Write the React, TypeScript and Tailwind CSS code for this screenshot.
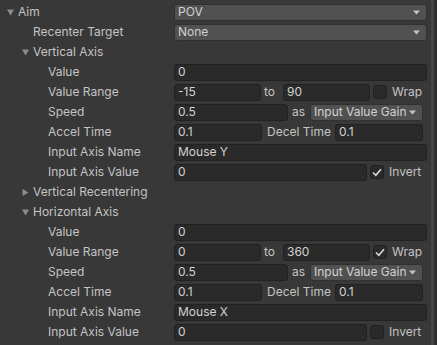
import type { ReactNode } from "react";

// Unity-style inspector for a Cinemachine POV aim block.

function Arrow({ open }: { open: boolean }) {
  return (
    <svg width="7" height="7" viewBox="0 0 7 7" className="shrink-0">
      {open ? <path d="M0 0.5 H7 L3.5 6.5 Z" fill="#8c8c8c" /> : <path d="M0.5 0 V7 L6.5 3.5 Z" fill="#8c8c8c" />}
    </svg>
  );
}

function Row({
  level,
  label,
  fold,
  children,
}: {
  level: number;
  label: string;
  fold?: "open" | "closed";
  children?: ReactNode;
}) {
  return (
    <div className="flex h-5 items-center">
      <div className="flex w-[174px] shrink-0 items-center" style={{ paddingLeft: 7 + level * 15 }}>
        <div className="flex w-[11px] shrink-0 items-center">{fold && <Arrow open={fold === "open"} />}</div>
        <span className="whitespace-nowrap">{label}</span>
      </div>
      {children && <div className="flex w-[253px] items-center">{children}</div>}
    </div>
  );
}

function Field({ value, w }: { value: string; w?: string }) {
  return (
    <div
      className={`flex h-[17px] shrink-0 items-center rounded-[3px] border border-[#212121] bg-[#2a2a2a] px-[3px] text-[#d2d2d2] ${w ?? "w-full"}`}
    >
      {value}
    </div>
  );
}

function Dropdown({ value, w }: { value: string; w?: string }) {
  return (
    <div
      className={`flex h-[17px] shrink-0 items-center justify-between rounded-[3px] border border-[#303030] bg-[#515151] pl-[3px] pr-[6px] text-[#d2d2d2] ${w ?? "w-full"}`}
    >
      <span>{value}</span>
      <svg width="7" height="5" viewBox="0 0 7 5">
        <path d="M0 0.5 H7 L3.5 4.5 Z" fill="#c4c4c4" />
      </svg>
    </div>
  );
}

function Check({ on }: { on: boolean }) {
  return (
    <div className="flex h-[14px] w-[14px] shrink-0 items-center justify-center rounded-[3px] border border-[#212121] bg-[#2a2a2a]">
      {on && (
        <svg width="10" height="9" viewBox="0 0 10 9">
          <path d="M1 4.5 L3.8 7.3 L9 1.2" stroke="#d8d8d8" strokeWidth="1.6" fill="none" />
        </svg>
      )}
    </div>
  );
}

function AxisRows({ range, wrap, name, invert }: { range: [string, string]; wrap: boolean; name: string; invert: boolean }) {
  return (
    <>
      <Row level={2} label="Value">
        <Field value="0" />
      </Row>
      <Row level={2} label="Value Range">
        <Field value={range[0]} w="w-[87px]" />
        <span className="w-[22px] shrink-0 pl-[3px]">to</span>
        <Field value={range[1]} w="w-[87px]" />
        <div className="ml-[3px]">
          <Check on={wrap} />
        </div>
        <span className="ml-[5px]">Wrap</span>
      </Row>
      <Row level={2} label="Speed">
        <Field value="0.5" w="w-[114px]" />
        <span className="w-[22px] shrink-0 pl-[4px]">as</span>
        <Dropdown value="Input Value Gain" w="w-[113px]" />
      </Row>
      <Row level={2} label="Accel Time">
        <Field value="0.1" w="w-[88px]" />
        <span className="w-[73px] shrink-0 whitespace-nowrap pl-[5px]">Decel Time</span>
        <Field value="0.1" w="w-[88px]" />
      </Row>
      <Row level={2} label="Input Axis Name">
        <Field value={name} />
      </Row>
      <Row level={2} label="Input Axis Value">
        <Field value="0" w="w-[193px]" />
        <div className="ml-[3px]">
          <Check on={invert} />
        </div>
        <span className="ml-[5px]">Invert</span>
      </Row>
    </>
  );
}

export default function App() {
  return (
    <div className="flex h-[345px] w-[437px] bg-[#383838] font-['Inter',sans-serif] text-[12px] text-[#c4c4c4]">
      <div className="flex w-[431px] flex-col pt-[2px]">
        <Row level={0} label="Aim" fold="open">
          <Dropdown value="POV" />
        </Row>
        <Row level={1} label="Recenter Target">
          <Dropdown value="None" />
        </Row>
        <Row level={1} label="Vertical Axis" fold="open" />
        <AxisRows range={["-15", "90"]} wrap={false} name="Mouse Y" invert={true} />
        <Row level={1} label="Vertical Recentering" fold="closed" />
        <Row level={1} label="Horizontal Axis" fold="open" />
        <AxisRows range={["0", "360"]} wrap={true} name="Mouse X" invert={false} />
      </div>
      <div className="w-[3px] bg-[#464646]" />
      <div className="w-[3px] bg-[#303030]" />
    </div>
  );
}
